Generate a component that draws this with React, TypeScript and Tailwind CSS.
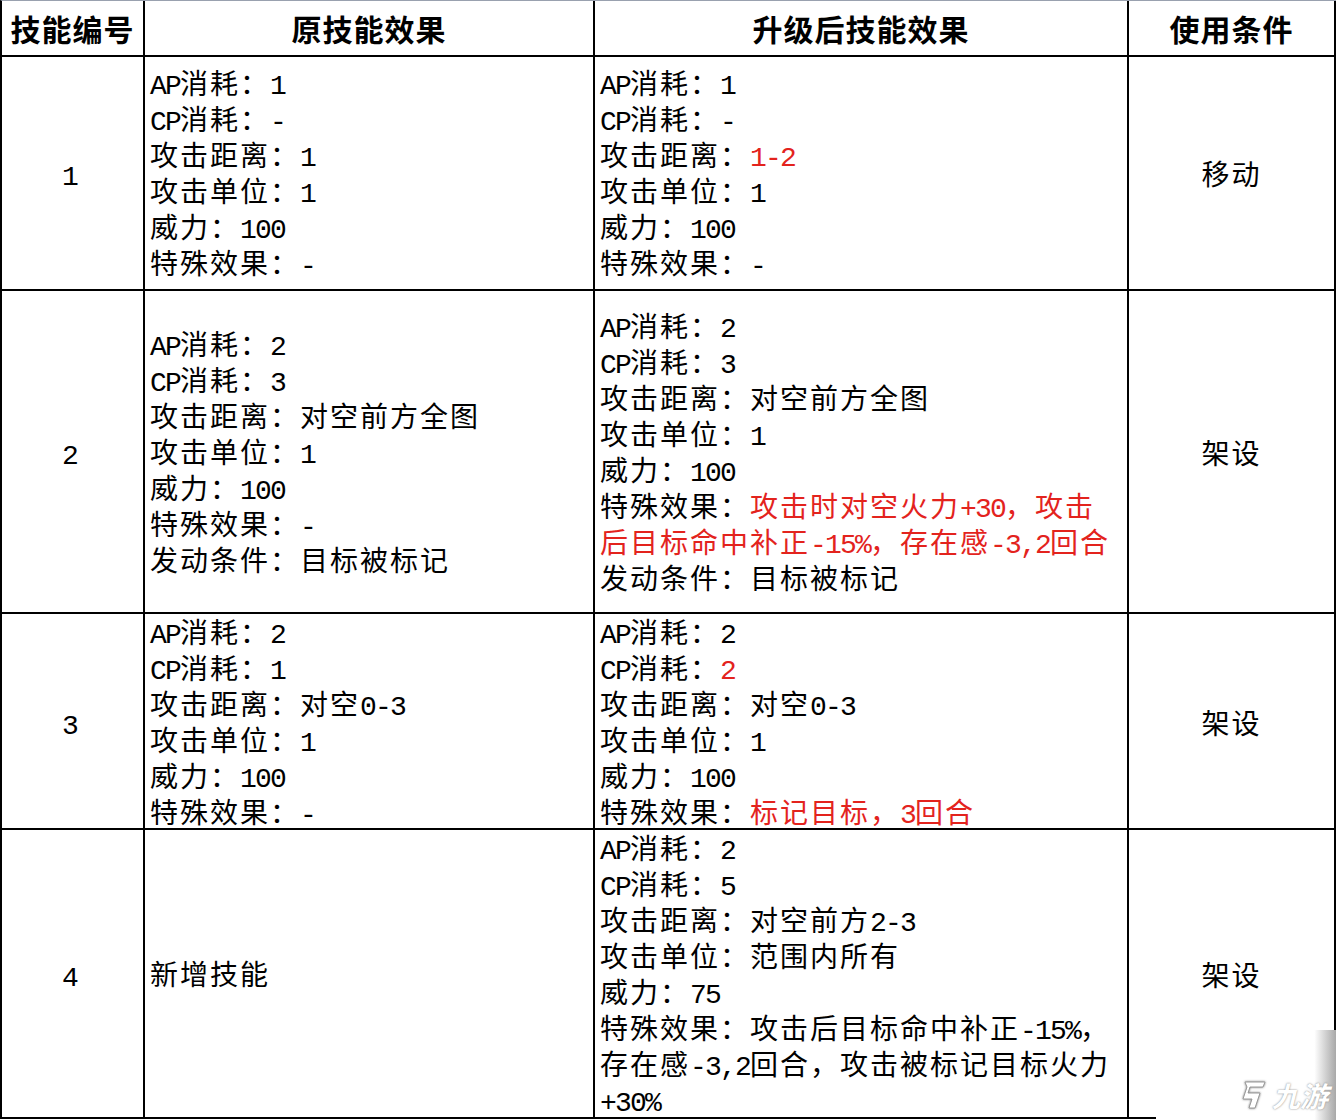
import React from "react";

type Line = [string, string?];
type Row = { no: string; before: Line[]; after: Line[]; cond: string; h: string };

const FONT = "[font-family:'Liberation_Mono','Noto_Sans_CJK_SC',monospace]";

// Latin runs get narrower (half-width like SimSun), CJK runs keep tracking
const Txt: React.FC<{ s: string }> = ({ s }) => {
  const parts = s.split(/([A-Za-z0-9+\-%,.]+)/);
  return (
    <>
      {parts.map((p, i) =>
        /^[A-Za-z0-9+\-%,.]+$/.test(p) ? (
          <span key={i} className="tracking-[-1.8px]">
            {p}
          </span>
        ) : (
          <span key={i}>{p}</span>
        )
      )}
    </>
  );
};

const rows: Row[] = [
  {
    no: "1",
    h: "h-[234px]",
    before: [["AP消耗：1"], ["CP消耗：-"], ["攻击距离：1"], ["攻击单位：1"], ["威力：100"], ["特殊效果：-"]],
    after: [["AP消耗：1"], ["CP消耗：-"], ["攻击距离：", "1-2"], ["攻击单位：1"], ["威力：100"], ["特殊效果：-"]],
    cond: "移动",
  },
  {
    no: "2",
    h: "h-[323px]",
    before: [
      ["AP消耗：2"],
      ["CP消耗：3"],
      ["攻击距离：对空前方全图"],
      ["攻击单位：1"],
      ["威力：100"],
      ["特殊效果：-"],
      ["发动条件：目标被标记"],
    ],
    after: [
      ["AP消耗：2"],
      ["CP消耗：3"],
      ["攻击距离：对空前方全图"],
      ["攻击单位：1"],
      ["威力：100"],
      ["特殊效果：", "攻击时对空火力+30，攻击"],
      ["", "后目标命中补正-15%，存在感-3,2回合"],
      ["发动条件：目标被标记"],
    ],
    cond: "架设",
  },
  {
    no: "3",
    h: "h-[216px]",
    before: [["AP消耗：2"], ["CP消耗：1"], ["攻击距离：对空0-3"], ["攻击单位：1"], ["威力：100"], ["特殊效果：-"]],
    after: [
      ["AP消耗：2"],
      ["CP消耗：", "2"],
      ["攻击距离：对空0-3"],
      ["攻击单位：1"],
      ["威力：100"],
      ["特殊效果：", "标记目标，3回合"],
    ],
    cond: "架设",
  },
  {
    no: "4",
    h: "h-[289px]",
    before: [["新增技能"]],
    after: [
      ["AP消耗：2"],
      ["CP消耗：5"],
      ["攻击距离：对空前方2-3"],
      ["攻击单位：范围内所有"],
      ["威力：75"],
      ["特殊效果：攻击后目标命中补正-15%，"],
      ["存在感-3,2回合，攻击被标记目标火力"],
      ["+30%"],
    ],
    cond: "架设",
  },
];

// 36px rows; the taller leading drops the glyphs a little, like the original font
const Lines: React.FC<{ lines: Line[] }> = ({ lines }) => (
  <div className="flex flex-col">
    {lines.map((l, i) => (
      <div key={i} className="h-[36px] whitespace-nowrap leading-[44px]">
        <Txt s={l[0]} />
        {l[1] && (
          <span className="text-[#e3231d]">
            <Txt s={l[1]} />
          </span>
        )}
      </div>
    ))}
  </div>
);

export default function App() {
  return (
    <div className={`relative h-[1120px] w-[1336px] overflow-hidden bg-white text-[28px] tracking-[2px] text-black ${FONT}`}>
      <div className="flex flex-col border-t border-l-2 border-t-gray-400 border-l-black">
        <div className="grid h-[56px] grid-cols-[143px_450px_534px_207px] border-b-2 border-black text-[30px] font-bold tracking-[1px] [font-family:'Noto_Sans_CJK_SC',sans-serif]">
          <div className="flex items-center justify-center border-r-2 border-black">技能编号</div>
          <div className="flex items-center justify-center border-r-2 border-black">原技能效果</div>
          <div className="flex items-center justify-center border-r-2 border-black">升级后技能效果</div>
          <div className="flex items-center justify-center border-r-2 border-black">使用条件</div>
        </div>
        {rows.map((r) => (
          <div key={r.no} className={`grid grid-cols-[143px_450px_534px_207px] border-b-2 border-black ${r.h}`}>
            <div className="flex items-center justify-center border-r-2 border-black pr-[2px] pt-[10px]">{r.no}</div>
            <div className="flex items-center border-r-2 border-black pl-[5px]">
              <Lines lines={r.before} />
            </div>
            <div className="flex items-center border-r-2 border-black pl-[5px]">
              <Lines lines={r.after} />
            </div>
            <div className="flex items-center justify-center border-r-2 border-black pt-[10px]">{r.cond}</div>
          </div>
        ))}
      </div>

      {/* watermark */}
      <div className="absolute left-[1156px] top-[1030px] flex h-[90px] w-[180px] items-end justify-end bg-gradient-to-r from-white via-white via-88% to-[#a8a8a8] pb-[4px] pr-[8px]">
        <div className="flex items-center gap-[2px]">
          <svg width="34" height="34" viewBox="0 0 34 34" className="drop-shadow-[0_0_1px_#777]">
            <path
              d="M9 4 H29 L27 9 H14 L12 15 H24 L19 30 H13 L16 21 H7 L11 9 Z"
              fill="white"
              stroke="#9a9a9a"
              strokeWidth="1"
            />
          </svg>
          <span className="text-[28px] font-bold italic tracking-[0px] text-white [font-family:'Noto_Sans_CJK_SC',sans-serif] [text-shadow:0_0_2px_#777]">
            九游
          </span>
        </div>
      </div>
    </div>
  );
}
